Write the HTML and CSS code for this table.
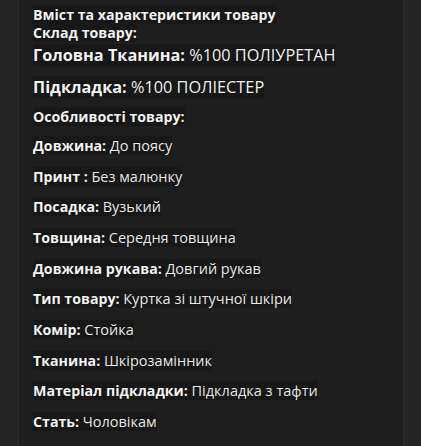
FILE: index.html
```html
<!DOCTYPE html>
<html lang="uk">
<head>
<meta charset="utf-8">
<title>Вміст та характеристики товару</title>
<link rel="stylesheet" href="styles.css">
</head>
<body>
<div class="panel">
  <div class="heading"><span class="t">Вміст та характеристики товару</span></div>
  <div class="heading"><span class="t">Склад товару:</span></div>
  <div class="big first"><span class="t"><b>Головна Тканина:</b> %100 ПОЛІУРЕТАН</span></div>
  <div class="big"><span class="t"><b>Підкладка:</b> %100 ПОЛІЕСТЕР</span></div>
  <div class="heading sub"><span class="t">Особливості товару:</span></div>
  <ul class="props">
    <li><span class="t"><b>Довжина:</b> <span class="v">До поясу</span></span></li>
    <li><span class="t"><b>Принт :</b> <span class="v">Без малюнку</span></span></li>
    <li><span class="t"><b>Посадка:</b> <span class="v">Вузький</span></span></li>
    <li><span class="t"><b>Товщина:</b> <span class="v">Середня товщина</span></span></li>
    <li><span class="t"><b>Довжина рукава:</b> <span class="v">Довгий рукав</span></span></li>
    <li><span class="t"><b>Тип товару:</b> <span class="v">Куртка зі штучної шкіри</span></span></li>
    <li><span class="t"><b>Комір:</b> <span class="v">Стойка</span></span></li>
    <li><span class="t"><b>Тканина:</b> <span class="v">Шкірозамінник</span></span></li>
    <li><span class="t"><b>Матеріал підкладки:</b> <span class="v">Підкладка з тафти</span></span></li>
    <li><span class="t"><b>Стать:</b> <span class="v">Чоловікам</span></span></li>
  </ul>
</div>
</body>
</html>
```
FILE: styles.css
```css
html, body {
  margin: 0;
  padding: 0;
  background: #252525;
  height: 100%;
  overflow: hidden;
}
body {
  font-family: "Open Sans", "DejaVu Sans", sans-serif;
  color: #f4f4f4;
}
.panel {
  margin-left: 18px;
  width: 386px;
  min-height: 460px;
  box-sizing: border-box;
  background: #1e1e1e;
  border-left: 1px solid #2a2a2a;
  border-right: 1px solid #2c2c2c;
  padding: 6px 0 0 14px;
}
.t {
  background: #181818;
  text-shadow: 0 0 1px #000;
}
b {
  font-weight: 700;
}
.v {
  font-size: 14.5px;
  line-height: 1;
  color: #ececec;
}
.heading {
  font-size: 14.2px;
  font-weight: 700;
  line-height: 18px;
}
.big {
  font-size: 16.3px;
  line-height: 22px;
  margin-bottom: 10px;
}
.big.first {
  margin-top: 2px;
}
.heading.sub {
  margin-top: 2px;
}
.props {
  list-style: none;
  margin: 10px 0 0;
  padding: 0;
}
.props li {
  font-size: 14.2px;
  line-height: 20px;
  height: 20px;
  margin-bottom: 10.67px;
}
```
